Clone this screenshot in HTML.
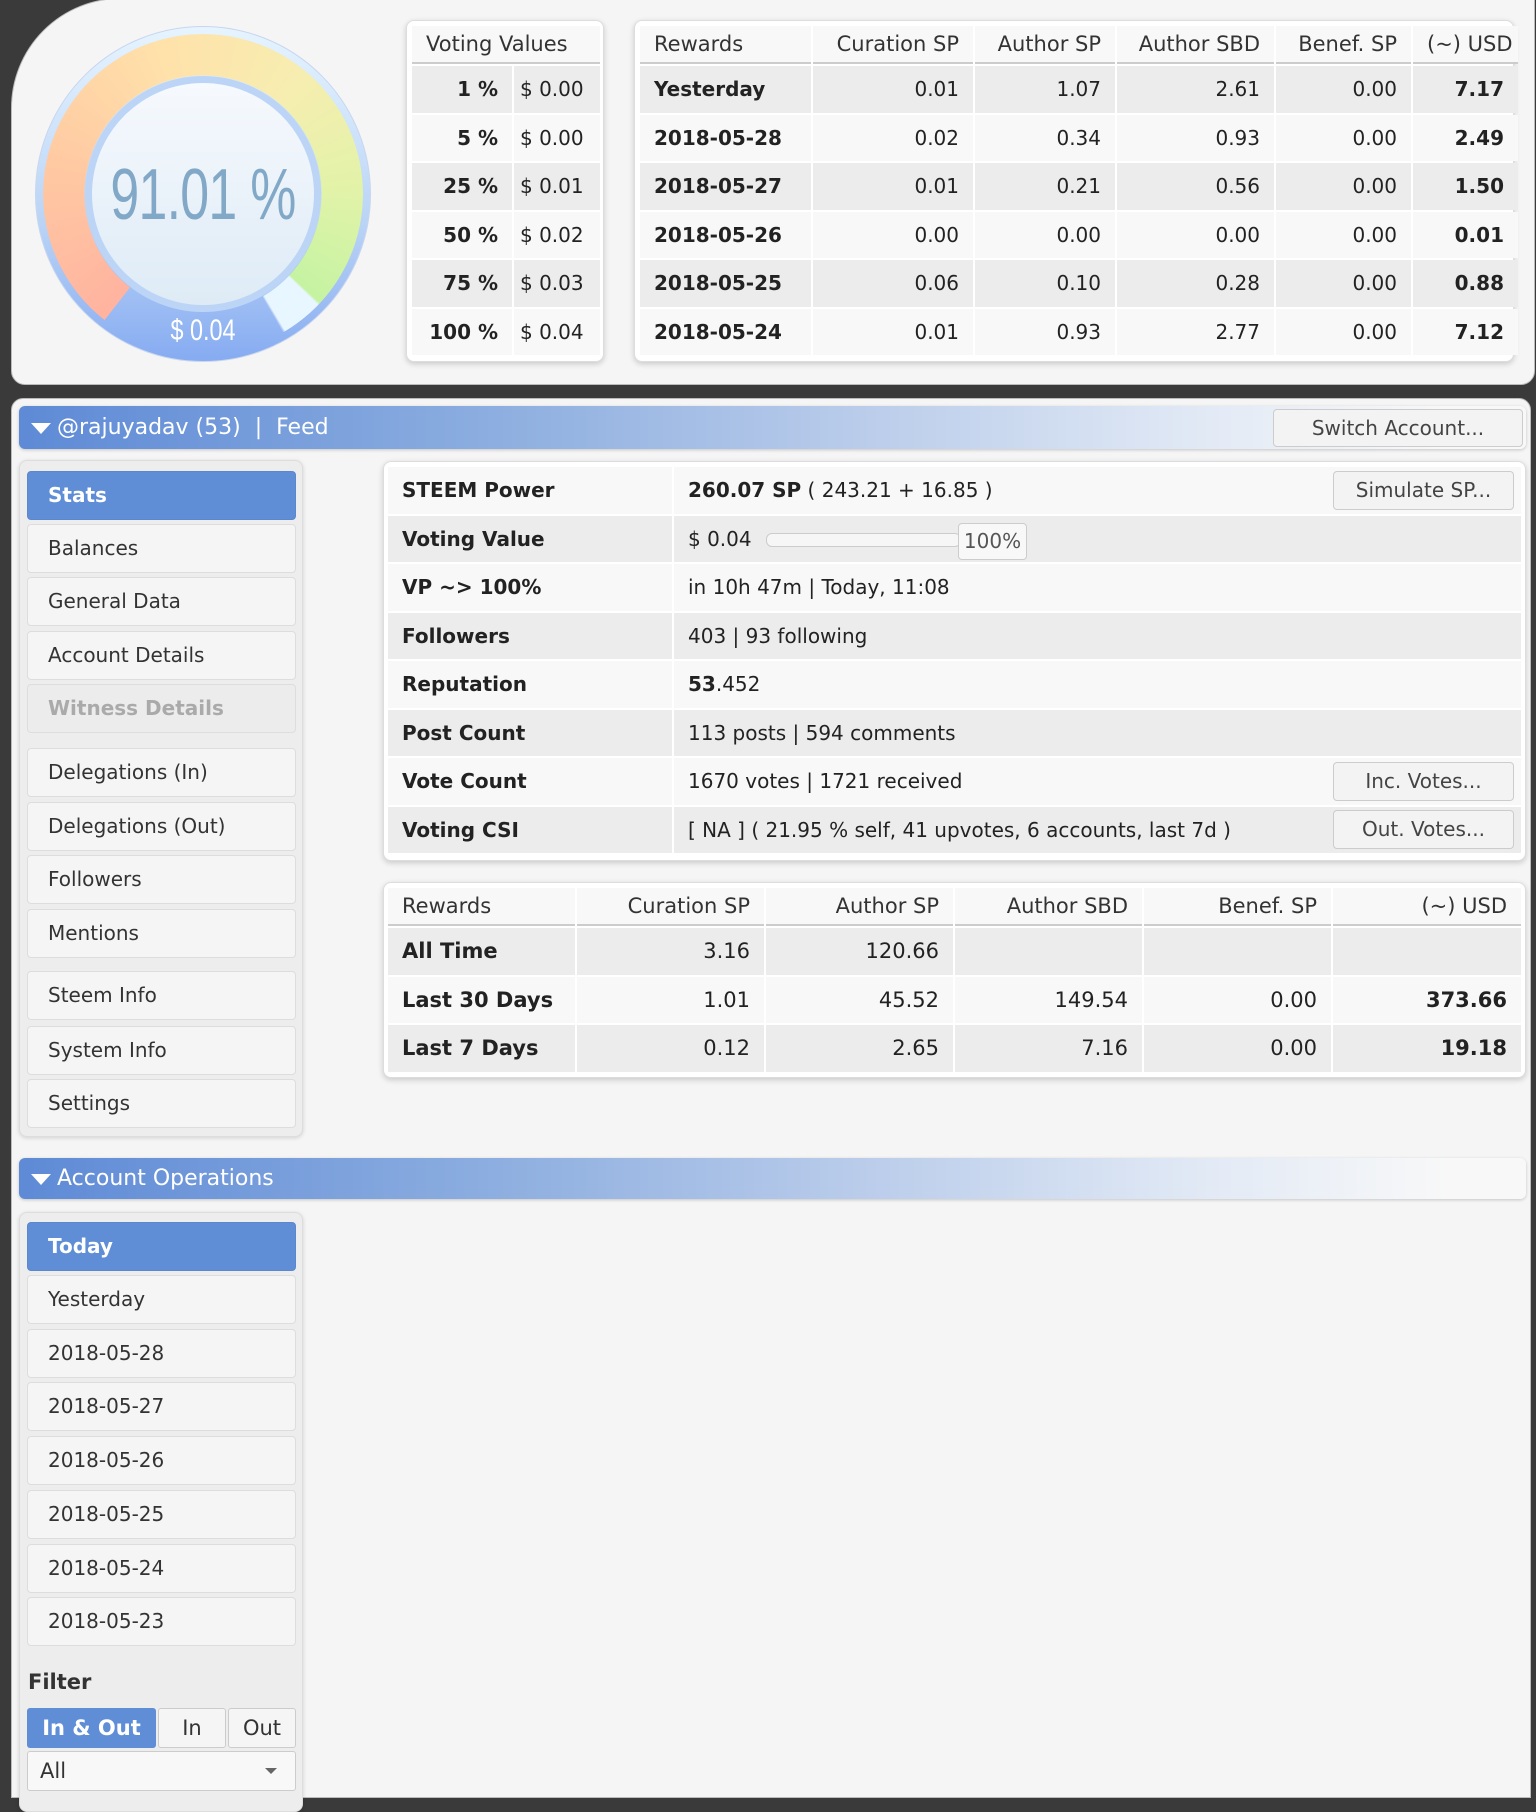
<!DOCTYPE html>
<html><head><meta charset="utf-8">
<style>
*{box-sizing:border-box;margin:0;padding:0}
body{width:1536px;height:1785px;background:#3a3a3a;position:relative;overflow:hidden;font-family:"DejaVu Sans","Liberation Sans",sans-serif;color:#222;font-size:20px}
.abs{position:absolute}
.panel{background:#f5f5f5;border:1px solid #bbb}
.box{background:#fff;border:1px solid #ddd;border-radius:8px;box-shadow:0 2px 6px rgba(0,0,0,.18)}
table{border-collapse:separate;border-spacing:2px;table-layout:fixed}
td,th{padding:0 14px;white-space:nowrap}
th{font-weight:normal;color:#333;border-bottom:2px solid #ccc;background:#f8f8f8}
tr.g td{background:#ececec}
tr.w td{background:#f8f8f8}
.r{text-align:right}
.b{font-weight:bold}
.item{position:absolute;left:27px;width:269px;height:49px;background:#f5f5f5;border:1px solid #ddd;border-radius:4px;padding-left:20px;line-height:47px;color:#333;font-size:20px}
.item.sel{background:#5f8dd6;color:#fff;border-color:#5a87d0;font-weight:bold}
.btn{position:absolute;background:#f3f3f3;border:1px solid #ccc;border-radius:4px;text-align:center;color:#444;font-size:20px}
.bar{position:absolute;left:19px;width:1507px;border-radius:6px;background:linear-gradient(90deg,#5e8ad6 0%,#8aacdf 30%,#b8cbea 55%,#e4ebf6 80%,#f8f8f8 95%);color:#fff;font-size:22px;box-shadow:0 1px 3px rgba(0,0,0,.2)}
</style></head><body>

<div class="abs panel" style="left:11px;top:-2px;width:1524px;height:387px;border-radius:110px 0 14px 14px"></div>

<div class="abs" style="left:35px;top:26px;width:336px;height:336px;border-radius:50%;background:linear-gradient(#e6f4ff,#b9d3f6 60%,#86abf1);border:1px solid #c8d6ee"></div>
<div class="abs" style="left:43px;top:34px;width:320px;height:320px;border-radius:50%;background:conic-gradient(from 218deg,#ffb3a0 0deg,#ffc8a2 60deg,#ffe1aa 125deg,#f7edb0 180deg,#e2f3a8 230deg,#c5f3a2 275deg,#e8f6ff 276deg,#e8f6ff 291deg,transparent 292deg);-webkit-mask:radial-gradient(circle,transparent 118px,#000 119px);mask:radial-gradient(circle,transparent 118px,#000 119px)"></div>
<div class="abs" style="left:85px;top:76px;width:236px;height:236px;border-radius:50%;background:#bcd5f7"></div>
<div class="abs" style="left:92px;top:83px;width:222px;height:222px;border-radius:50%;background:linear-gradient(#f6f9fd,#deebf6)"></div>
<div class="abs" style="left:43px;top:154px;width:320px;text-align:center;color:#82a8c8;font-family:'Liberation Sans',sans-serif;font-size:72px;transform:scaleX(.72);letter-spacing:-1px">91.01 %</div>
<div class="abs" style="left:43px;top:314px;width:320px;text-align:center;color:#fff;font-family:'Liberation Sans',sans-serif;font-size:30px;transform:scaleX(.78)">$ 0.04</div>

<div class="abs box" style="left:406px;top:20px;width:198px;height:342px"></div>
<table class="abs" style="left:410px;top:24px;width:190px">
<col style="width:100px"><col style="width:86px">
<tr><th colspan="2" style="height:38px;text-align:left;font-size:21px">Voting Values</th></tr>
<tr class="g" style="height:46.5px"><td class="r b">1 %</td><td style="padding:0 6px">$ 0.00</td></tr>
<tr class="w" style="height:46.5px"><td class="r b">5 %</td><td style="padding:0 6px">$ 0.00</td></tr>
<tr class="g" style="height:46.5px"><td class="r b">25 %</td><td style="padding:0 6px">$ 0.01</td></tr>
<tr class="w" style="height:46.5px"><td class="r b">50 %</td><td style="padding:0 6px">$ 0.02</td></tr>
<tr class="g" style="height:46.5px"><td class="r b">75 %</td><td style="padding:0 6px">$ 0.03</td></tr>
<tr class="w" style="height:46.5px"><td class="r b">100 %</td><td style="padding:0 6px">$ 0.04</td></tr>
</table>

<div class="abs box" style="left:634px;top:20px;width:880px;height:342px"></div>
<table class="abs" style="left:638px;top:24px;width:872px">
<col style="width:171px"><col style="width:160px"><col style="width:140px"><col style="width:157px"><col style="width:135px"><col style="width:105px">
<tr style="height:38px;font-size:21px"><th style="text-align:left">Rewards</th><th class="r">Curation SP</th><th class="r">Author SP</th><th class="r">Author SBD</th><th class="r">Benef. SP</th><th class="r">(~) USD</th></tr>
<tr class="g" style="height:46.5px"><td class="b">Yesterday</td><td class="r">0.01</td><td class="r">1.07</td><td class="r">2.61</td><td class="r">0.00</td><td class="r b">7.17</td></tr>
<tr class="w" style="height:46.5px"><td class="b">2018-05-28</td><td class="r">0.02</td><td class="r">0.34</td><td class="r">0.93</td><td class="r">0.00</td><td class="r b">2.49</td></tr>
<tr class="g" style="height:46.5px"><td class="b">2018-05-27</td><td class="r">0.01</td><td class="r">0.21</td><td class="r">0.56</td><td class="r">0.00</td><td class="r b">1.50</td></tr>
<tr class="w" style="height:46.5px"><td class="b">2018-05-26</td><td class="r">0.00</td><td class="r">0.00</td><td class="r">0.00</td><td class="r">0.00</td><td class="r b">0.01</td></tr>
<tr class="g" style="height:46.5px"><td class="b">2018-05-25</td><td class="r">0.06</td><td class="r">0.10</td><td class="r">0.28</td><td class="r">0.00</td><td class="r b">0.88</td></tr>
<tr class="w" style="height:46.5px"><td class="b">2018-05-24</td><td class="r">0.01</td><td class="r">0.93</td><td class="r">2.77</td><td class="r">0.00</td><td class="r b">7.12</td></tr>
</table>

<div class="abs panel" style="left:11px;top:398px;width:1520px;height:1400px;border-radius:12px 12px 0 0"></div>

<div class="bar" style="top:406px;height:43px;line-height:43px;padding-left:38px">@rajuyadav (53) &nbsp;| &nbsp;Feed</div>
<div class="abs" style="left:31px;top:423px;width:0;height:0;border-left:10px solid transparent;border-right:10px solid transparent;border-top:11px solid #fff"></div>
<div class="btn" style="left:1273px;top:409px;width:250px;height:38px;line-height:36px">Switch Account...</div>

<div class="abs" style="left:19px;top:460px;width:284px;height:677px;background:#ededed;border:1px solid #ddd;border-radius:8px;box-shadow:0 1px 4px rgba(0,0,0,.15)"></div>
<div class="item sel" style="top:471px">Stats</div>
<div class="item" style="top:524px">Balances</div>
<div class="item" style="top:577px">General Data</div>
<div class="item" style="top:631px">Account Details</div>
<div class="item" style="top:684px;background:#ececec;color:#aaa;font-weight:bold">Witness Details</div>
<div class="item" style="top:748px">Delegations (In)</div>
<div class="item" style="top:802px">Delegations (Out)</div>
<div class="item" style="top:855px">Followers</div>
<div class="item" style="top:909px">Mentions</div>
<div class="item" style="top:971px">Steem Info</div>
<div class="item" style="top:1026px">System Info</div>
<div class="item" style="top:1079px">Settings</div>

<div class="abs box" style="left:383px;top:461px;width:1143px;height:400px"></div>
<table class="abs" style="left:386px;top:465px;width:1137px">
<col style="width:284px"><col>
<tr class="w" style="height:46.5px"><td class="b" style="padding-left:14px">STEEM Power</td><td><b>260.07 SP</b> ( 243.21 + 16.85 )</td></tr>
<tr class="g" style="height:46.5px"><td class="b">Voting Value</td><td>$ 0.04</td></tr>
<tr class="w" style="height:46.5px"><td class="b">VP ~&gt; 100%</td><td>in 10h 47m | Today, 11:08</td></tr>
<tr class="g" style="height:46.5px"><td class="b">Followers</td><td>403 | 93 following</td></tr>
<tr class="w" style="height:46.5px"><td class="b">Reputation</td><td><b>53</b>.452</td></tr>
<tr class="g" style="height:46.5px"><td class="b">Post Count</td><td>113 posts | 594 comments</td></tr>
<tr class="w" style="height:46.5px"><td class="b">Vote Count</td><td>1670 votes | 1721 received</td></tr>
<tr class="g" style="height:46.5px"><td class="b">Voting CSI</td><td>[ NA ] ( 21.95 % self, 41 upvotes, 6 accounts, last 7d )</td></tr>
</table>
<div class="abs" style="left:766px;top:533px;width:195px;height:14px;background:#f6f6f6;border:1px solid #ccc;border-radius:6px"></div>
<div class="abs" style="left:958px;top:523px;width:69px;height:37px;background:#f8f8f8;border:1px solid #ccc;border-radius:4px;line-height:35px;text-align:center;color:#555;font-size:20px">100%</div>
<div class="btn" style="left:1333px;top:471px;width:181px;height:39px;line-height:37px">Simulate SP...</div>
<div class="btn" style="left:1333px;top:762px;width:181px;height:39px;line-height:37px">Inc. Votes...</div>
<div class="btn" style="left:1333px;top:810px;width:181px;height:39px;line-height:37px">Out. Votes...</div>

<div class="abs box" style="left:383px;top:882px;width:1143px;height:196px"></div>
<table class="abs" style="left:386px;top:886px;width:1137px;font-size:21px">
<col style="width:187px"><col style="width:187px"><col style="width:187px"><col style="width:187px"><col style="width:187px"><col>
<tr style="height:38px"><th style="text-align:left">Rewards</th><th class="r">Curation SP</th><th class="r">Author SP</th><th class="r">Author SBD</th><th class="r">Benef. SP</th><th class="r">(~) USD</th></tr>
<tr class="g" style="height:46.5px"><td class="b">All Time</td><td class="r">3.16</td><td class="r">120.66</td><td></td><td></td><td></td></tr>
<tr class="w" style="height:46.5px"><td class="b">Last 30 Days</td><td class="r">1.01</td><td class="r">45.52</td><td class="r">149.54</td><td class="r">0.00</td><td class="r b">373.66</td></tr>
<tr class="g" style="height:46.5px"><td class="b">Last 7 Days</td><td class="r">0.12</td><td class="r">2.65</td><td class="r">7.16</td><td class="r">0.00</td><td class="r b">19.18</td></tr>
</table>

<div class="bar" style="top:1158px;height:41px;line-height:41px;padding-left:38px">Account Operations</div>
<div class="abs" style="left:31px;top:1174px;width:0;height:0;border-left:10px solid transparent;border-right:10px solid transparent;border-top:11px solid #fff"></div>

<div class="abs" style="left:19px;top:1212px;width:284px;height:600px;background:#ededed;border:1px solid #ddd;border-radius:8px;box-shadow:0 1px 4px rgba(0,0,0,.15)"></div>
<div class="item sel" style="top:1222px">Today</div>
<div class="item" style="top:1275px">Yesterday</div>
<div class="item" style="top:1329px">2018-05-28</div>
<div class="item" style="top:1382px">2018-05-27</div>
<div class="item" style="top:1436px">2018-05-26</div>
<div class="item" style="top:1490px">2018-05-25</div>
<div class="item" style="top:1544px">2018-05-24</div>
<div class="item" style="top:1597px">2018-05-23</div>
<div class="abs" style="left:28px;top:1670px;font-weight:bold;color:#333;font-size:21px">Filter</div>
<div class="abs" style="left:27px;top:1708px;width:129px;height:40px;background:#5f8dd6;border-radius:3px;color:#fff;font-weight:bold;text-align:center;line-height:40px;font-size:21px">In &amp; Out</div>
<div class="abs" style="left:158px;top:1708px;width:68px;height:40px;background:#f5f5f5;border:1px solid #ccc;border-radius:3px;text-align:center;line-height:38px;color:#333;font-size:21px">In</div>
<div class="abs" style="left:228px;top:1708px;width:68px;height:40px;background:#f5f5f5;border:1px solid #ccc;border-radius:3px;text-align:center;line-height:38px;color:#333;font-size:21px">Out</div>
<div class="abs" style="left:27px;top:1751px;width:269px;height:40px;background:#f8f8f8;border:1px solid #ccc;border-radius:3px;padding-left:12px;line-height:38px;color:#333;font-size:21px">All</div>
<div class="abs" style="left:265px;top:1768px;width:0;height:0;border-left:6px solid transparent;border-right:6px solid transparent;border-top:6px solid #666"></div>

</body></html>
